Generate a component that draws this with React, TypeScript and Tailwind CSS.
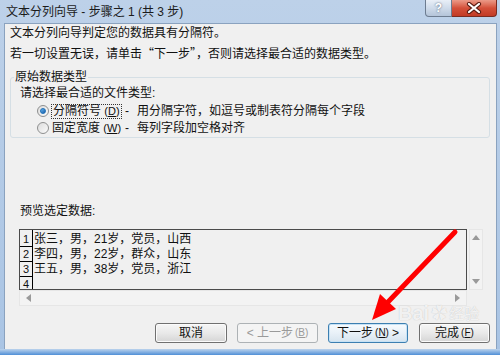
import React from 'react'

const rows = [
  { n: '1', text: '张三，男，21岁，党员，山西' },
  { n: '2', text: '李四，男，22岁，群众，山东' },
  { n: '3', text: '王五，男，38岁，党员，浙江' },
  { n: '4', text: '' },
]

function Radio({ checked }: { checked: boolean }) {
  return (
    <span className="w-[12px] h-[12px] rounded-full border border-[#8e8f8f] bg-gradient-to-br from-[#dcdcdc] to-[#fbfbfb] grid place-items-center flex-shrink-0">
      {checked && (
        <span className="w-[6px] h-[6px] rounded-full bg-gradient-to-br from-[#64b4f0] to-[#1a5ea6] border border-[#1d6fb8]" />
      )}
    </span>
  )
}

function Btn({ children, kind }: { children: React.ReactNode; kind?: 'default' | 'disabled' }) {
  const base = 'h-[20px] rounded-[3px] border text-[12px] leading-[18px] flex items-center justify-center'
  if (kind === 'disabled') {
    return <div className={`${base} border-[#adb2b5] bg-[#f4f4f4] text-[#9a9a9a]`}>{children}</div>
  }
  if (kind === 'default') {
    return (
      <div className={`${base} border-[#3c7fb1] bg-gradient-to-b from-[#f7fbfe] via-[#e9f1f8] to-[#d6e4ef] text-[#111] shadow-[inset_0_0_0_1px_#c7e2f5]`}>
        {children}
      </div>
    )
  }
  return (
    <div className={`${base} border-[#707070] bg-gradient-to-b from-[#f6f6f6] via-[#e9e9e9] to-[#d5d5d5] text-[#111] shadow-[inset_0_0_0_1px_#fbfbfb]`}>
      {children}
    </div>
  )
}

function Tri({ dir }: { dir: 'up' | 'down' | 'left' | 'right' }) {
  const pts = {
    up: '0,5 4,0 8,5',
    down: '0,0 8,0 4,5',
    left: '5,0 5,8 0,4',
    right: '0,0 0,8 5,4',
  }[dir]
  const vertical = dir === 'up' || dir === 'down'
  return (
    <svg width={vertical ? 8 : 5} height={vertical ? 5 : 8} viewBox={vertical ? '0 0 8 5' : '0 0 5 8'}>
      <polygon points={pts} fill="#9a9a9a" />
    </svg>
  )
}

export default function App() {
  return (
    <div className="relative w-[500px] h-[355px] overflow-hidden bg-gradient-to-b from-[#bdd1e9] to-[#a9c4e4] font-['Liberation_Sans','Noto_Sans_CJK_SC',sans-serif] text-[#111]">
      {/* title bar */}
      <div className="flex h-[23px]">
        <div className="pl-[6px] pt-[4px] text-[12px] leading-[16px] text-[#1b1b1b]">
          文本分列向导 - 步骤之 1 (共 3 步)
        </div>
        <div className="ml-auto mr-[3px] flex h-[18px]">
          <div className="w-[27px] h-[17px] rounded-bl-[4px] border border-t-0 border-[#6d7c90] bg-gradient-to-b from-[#e9eff7] via-[#cfdbea] to-[#b4c4d9] grid place-items-center text-[12px] leading-[12px] font-bold text-white [text-shadow:0_0_2px_#44546a]">
            ?
          </div>
          <div className="w-[45px] h-[17px] rounded-br-[4px] border border-t-0 border-l-0 border-[#7a2b20] bg-gradient-to-b from-[#eb9a88] via-[#d4503a] to-[#c23a25] grid place-items-center">
            <svg width="16" height="12" viewBox="0 0 16 12">
              <path d="M3 2 L13 10 M13 2 L3 10" stroke="#5b1c13" strokeWidth="4.2" strokeLinecap="round" />
              <path d="M3 2 L13 10 M13 2 L3 10" stroke="#fff" strokeWidth="2.2" strokeLinecap="round" />
            </svg>
          </div>
        </div>
      </div>

      {/* client area */}
      <div className="ml-[4px] mr-[3px] h-[326px] border-t border-l border-r border-[#8aa2bf] bg-[#f0f0f0] text-[12px]">
        <div className="pl-[5px] leading-[18px]">文本分列向导判定您的数据具有分隔符。</div>
        <div className="pl-[5px] mt-[2px] leading-[18px]">
          若一切设置无误，请单击<span className="font-['Noto_Sans_CJK_SC',sans-serif]">“</span>下一步
          <span className="font-['Noto_Sans_CJK_SC',sans-serif]">”</span>，否则请选择最合适的数据类型。
        </div>

        <fieldset className="mt-[7px] ml-[5px] w-[480px] h-[68px] border border-[#d5dfe5] rounded-[3px]">
          <legend className="ml-[3px] px-[1px] leading-[14px]">原始数据类型</legend>
          <div className="pl-[9px] mt-[1px] leading-[16px]">请选择最合适的文件类型:</div>
          <div className="pl-[26px] mt-[2px] flex items-center h-[16px]">
            <Radio checked />
            <span className="ml-[2px] w-[74px] flex-shrink-0">
              <span className="px-[1px] border border-dotted border-[#333] leading-[13px] inline-block">
                分隔符号 <span className="text-[11px]">(<u>D</u>)</span>
              </span>
            </span>
            <span>-</span>
            <span className="ml-[8px]">用分隔字符，如逗号或制表符分隔每个字段</span>
          </div>
          <div className="pl-[26px] mt-[1px] flex items-center h-[16px]">
            <Radio checked={false} />
            <span className="ml-[3px] w-[73px] flex-shrink-0">
              固定宽度 <span className="text-[11px]">(<u>W</u>)</span>
            </span>
            <span>-</span>
            <span className="ml-[8px]">每列字段加空格对齐</span>
          </div>
        </fieldset>

        <div className="pl-[15px] mt-[65px] leading-[16px]">预览选定数据:</div>

        <div className="ml-[14px] mt-[10px] grid grid-cols-[448px_14px] grid-rows-[61px_16px] gap-x-[2px]">
          <div className="border border-[#4a4a4a] overflow-hidden">
            {rows.map((r, i) => (
              <div key={r.n} className={`flex ${i === 0 ? 'h-[17px]' : 'h-[15px]'}`}>
                <div className="w-[13px] flex-shrink-0 border-r border-b border-black flex items-end justify-center text-[11px] leading-[14px]">
                  {r.n}
                </div>
                <div className="pl-[1px] flex items-end leading-[15px] whitespace-nowrap">{r.text}</div>
              </div>
            ))}
          </div>
          <div className="bg-[#f3f3f3] border border-[#e6e6e6] flex flex-col items-center justify-between py-[5px]">
            <Tri dir="up" />
            <Tri dir="down" />
          </div>
          <div className="bg-[#f3f3f3] border border-[#e6e6e6] flex items-center justify-between px-[6px]">
            <Tri dir="left" />
            <Tri dir="right" />
          </div>
          <div />
        </div>

        <div className="mt-[17px] pr-[6px] flex justify-end">
          <div className="w-[72px]">
            <Btn>取消</Btn>
          </div>
          <div className="w-[81px] ml-[10px]">
            <Btn kind="disabled">
              &lt; 上一步 <span className="text-[10px] ml-[2px]">(<u>B</u>)</span>
            </Btn>
          </div>
          <div className="w-[80px] ml-[10px]">
            <Btn kind="default">
              下一步 <span className="text-[10px] ml-[2px]">(<u>N</u>)</span>
              <span className="ml-[3px]">&gt;</span>
            </Btn>
          </div>
          <div className="w-[71px] ml-[11px]">
            <Btn>
              完成 <span className="text-[10px] ml-[2px]">(<u>F</u>)</span>
            </Btn>
          </div>
        </div>
      </div>

      {/* bottom frame */}
      <div className="h-[6px] bg-gradient-to-b from-[#bcd3ec] to-[#4f8fd6]" />

      {/* watermark */}
      <div className="absolute left-[398px] top-[303px] flex items-end text-white/80 [text-shadow:0_0_1px_#b5b5b5] pointer-events-none">
        <span className="text-[20px] leading-[20px] font-bold">Bai</span>
        <span className="text-[16px] leading-[18px] ml-[2px]">✿</span>
        <span className="text-[15px] leading-[18px] ml-[2px]">经验</span>
      </div>

      {/* red arrow */}
      <svg className="absolute left-0 top-0 pointer-events-none" width="500" height="355" viewBox="0 0 500 355">
        <line x1="455" y1="232" x2="388" y2="302" stroke="#ff0000" strokeWidth="5" strokeLinecap="round" />
        <polygon points="372,320 380,294 396,309" fill="#ff0000" />
      </svg>
    </div>
  )
}
